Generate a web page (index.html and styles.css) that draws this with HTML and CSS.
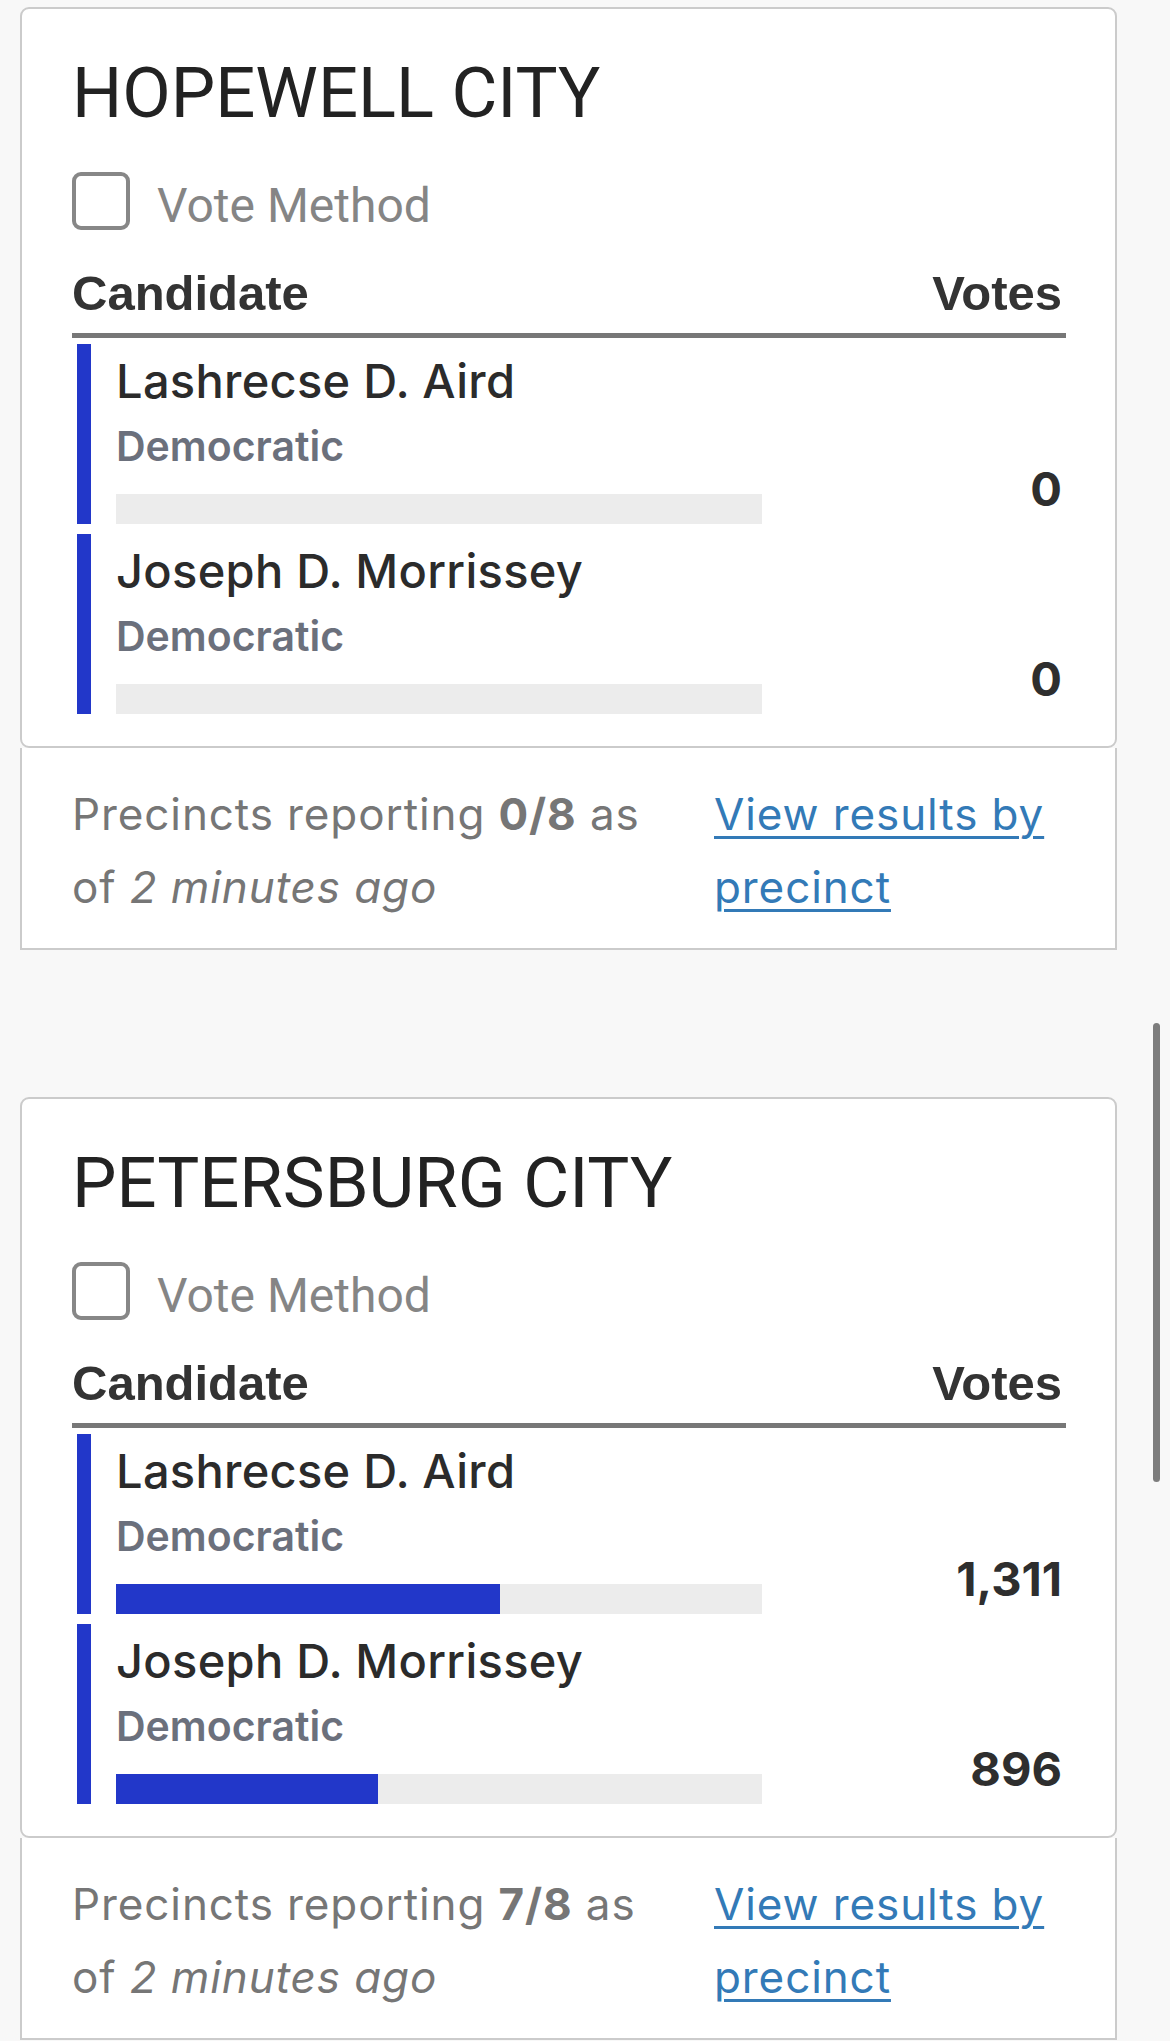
FILE: index.html
```html
<!DOCTYPE html>
<html lang="en">
<head>
<meta charset="utf-8">
<title>Results</title>
<link rel="stylesheet" href="styles.css">
</head>
<body>
<main class="page">
  <section class="race">
    <div class="card">
      <h2 class="title">HOPEWELL CITY</h2>
      <label class="method"><span class="box"></span><span class="method-label">Vote Method</span></label>
      <div class="table">
        <div class="thead"><span>Candidate</span><span class="votes-h">Votes</span></div>
        <div class="row">
          <div class="info">
            <div class="name">Lashrecse D. Aird</div>
            <div class="party">Democratic</div>
            <div class="bar"><div class="fill" style="width:0%"></div></div>
          </div>
          <div class="votes">0</div>
        </div>
        <div class="row">
          <div class="info">
            <div class="name">Joseph D. Morrissey</div>
            <div class="party">Democratic</div>
            <div class="bar"><div class="fill" style="width:0%"></div></div>
          </div>
          <div class="votes">0</div>
        </div>
      </div>
    </div>
    <div class="footer">
      <p class="status"><span>Precincts reporting </span><b>0/8</b><span> as </span><span>of </span><em>2 minutes ago</em></p>
      <p class="link-wrap"><a class="link" href="#"><span>View results by </span><span>precinct</span></a></p>
    </div>
  </section>

  <section class="race">
    <div class="card">
      <h2 class="title">PETERSBURG CITY</h2>
      <label class="method"><span class="box"></span><span class="method-label">Vote Method</span></label>
      <div class="table">
        <div class="thead"><span>Candidate</span><span class="votes-h">Votes</span></div>
        <div class="row">
          <div class="info">
            <div class="name">Lashrecse D. Aird</div>
            <div class="party">Democratic</div>
            <div class="bar"><div class="fill" style="width:59.4%"></div></div>
          </div>
          <div class="votes">1,311</div>
        </div>
        <div class="row">
          <div class="info">
            <div class="name">Joseph D. Morrissey</div>
            <div class="party">Democratic</div>
            <div class="bar"><div class="fill" style="width:40.6%"></div></div>
          </div>
          <div class="votes">896</div>
        </div>
      </div>
    </div>
    <div class="footer">
      <p class="status"><span>Precincts reporting </span><b>7/8</b><span> as </span><span>of </span><em>2 minutes ago</em></p>
      <p class="link-wrap"><a class="link" href="#"><span>View results by </span><span>precinct</span></a></p>
    </div>
  </section>
</main>
<div class="scroll-indicator"></div>
</body>
</html>
```

FILE: styles.css
```css
* { box-sizing: border-box; }

html, body {
  margin: 0;
  padding: 0;
  background: #f8f8f8;
  overflow: hidden;
}

.page {
  padding: 7px 0 0 20px;
}

.race {
  width: 1097px;
  margin-bottom: 147px;
}

.race:last-child {
  margin-bottom: 0;
}

.card {
  background: #fff;
  border: 2px solid #cbcbcb;
  border-radius: 9px;
  padding: 42px 49px 32px 50px;
}

.title {
  margin: 0;
  font-family: Roboto, "Liberation Sans", sans-serif;
  font-weight: 400;
  font-size: 70.5px;
  line-height: 84px;
  color: #222;
}

.method {
  display: flex;
  align-items: flex-start;
  margin-top: 37px;
  height: 58px;
}

.box {
  width: 58px;
  height: 58px;
  border: 4px solid #878787;
  border-radius: 9px;
  background: #fff;
  flex: none;
}

.method-label {
  margin-left: 27px;
  padding-top: 5px;
  font-family: Roboto, "Liberation Sans", sans-serif;
  font-size: 48px;
  line-height: 58px;
  color: #858585;
}

.table {
  margin-top: 36px;
}

.thead {
  display: flex;
  justify-content: space-between;
  padding: 0 4px 12px 0;
  border-bottom: 5px solid #777;
  font-family: "Liberation Sans", Arial, sans-serif;
  font-weight: 700;
  font-size: 49px;
  line-height: 55px;
  color: #333;
}

.row {
  display: flex;
  margin: 6px 0 0 5px;
  border-left: 14px solid #2237c9;
  padding: 8px 4px 0 25px;
  height: 180px;
}

.row + .row {
  margin-top: 10px;
}

.info {
  width: 646px;
  flex: none;
}

.name {
  font-family: Inter, "Noto Sans", sans-serif;
  font-weight: 500;
  font-size: 47px;
  line-height: 58px;
  letter-spacing: 0.3px;
  color: #2b2b2b;
}

.party {
  margin-top: 11px;
  font-family: Inter, "Noto Sans", sans-serif;
  font-weight: 600;
  font-size: 41px;
  line-height: 50px;
  color: #6b707c;
}

.bar {
  margin-top: 23px;
  height: 30px;
  background: #ececec;
}

.fill {
  height: 100%;
  background: #2237c9;
}

.votes {
  flex: 1;
  align-self: flex-end;
  text-align: right;
  padding-bottom: 7px;
  font-family: Inter, "Noto Sans", sans-serif;
  font-weight: 700;
  font-size: 47px;
  line-height: 57px;
  color: #2e2e2e;
}

.footer {
  display: grid;
  grid-template-columns: 592px 1fr;
  column-gap: 50px;
  background: #fff;
  border: 2px solid #cbcbcb;
  border-top: none;
  padding: 30px 49px 24px 50px;
  font-family: Inter, "Noto Sans", sans-serif;
  font-size: 44px;
  line-height: 73px;
  color: #767676;
}

.status {
  margin: 0;
  letter-spacing: 0.9px;
}

.link-wrap {
  margin: 0;
  letter-spacing: 0.9px;
}

.status b {
  font-weight: 700;
}

.link {
  color: #337ab7;
  text-decoration: underline;
  text-decoration-thickness: 3px;
  text-underline-offset: 6px;
}

.scroll-indicator {
  position: fixed;
  left: 1153px;
  top: 1023px;
  width: 7px;
  height: 459px;
  border-radius: 4px;
  background: #7d7d7d;
}
```
